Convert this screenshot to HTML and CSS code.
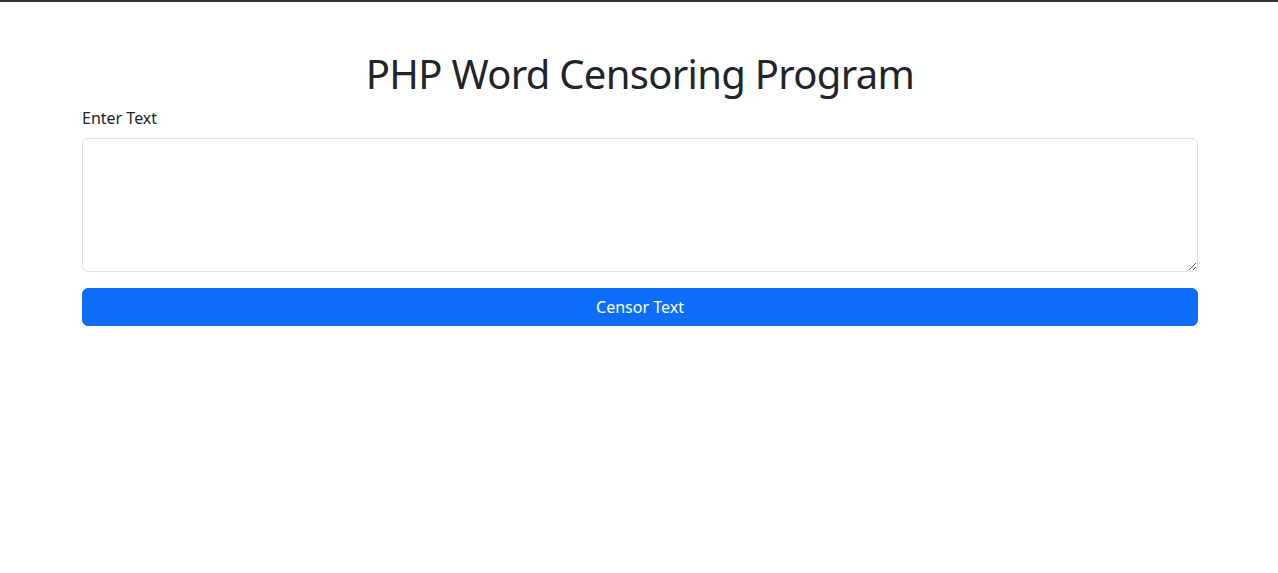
FILE: index.html
```html
<!DOCTYPE html>
<html lang="en">
<head>
<meta charset="utf-8">
<title>PHP Word Censoring Program</title>
<link rel="stylesheet" href="styles.css">
</head>
<body>
<div class="topbar"></div>
<main class="container">
  <h1 class="title">PHP Word Censoring Program</h1>
  <form class="form">
    <label class="label" for="text">Enter Text</label>
    <textarea class="field" id="text" rows="5"></textarea>
    <button type="button" class="btn">Censor Text</button>
  </form>
</main>
</body>
</html>
```

FILE: styles.css
```css
* { box-sizing: border-box; }
html, body { margin: 0; padding: 0; }
body {
  font-family: "Noto Sans", "Open Sans", sans-serif;
  font-size: 16px;
  line-height: 1.5;
  color: #212529;
  background: #fff;
}
.topbar { height: 2px; background: #333333; }
.container {
  max-width: 1140px;
  margin: 48px auto 0;
  padding: 0 11px 0 13px;
}
.title {
  font-size: 40px;
  font-weight: 400;
  line-height: 1.2;
  letter-spacing: -0.7px;
  margin: 0 0 8px;
  text-align: center;
}
.form { display: flex; flex-direction: column; }
.label { display: block; margin-bottom: 8px; }
.field {
  display: block;
  width: 100%;
  height: 134px;
  padding: 6px 12px;
  font: inherit;
  color: #212529;
  border: 1px solid #dee2e6;
  border-radius: 6px;
  margin-bottom: 16px;
  resize: vertical;
}
.btn {
  display: block;
  width: 100%;
  height: 38px;
  font: inherit;
  color: #fff;
  background: #0d6efd;
  border: 1px solid #0d6efd;
  border-radius: 6px;
  padding: 6px 12px;
}
```
